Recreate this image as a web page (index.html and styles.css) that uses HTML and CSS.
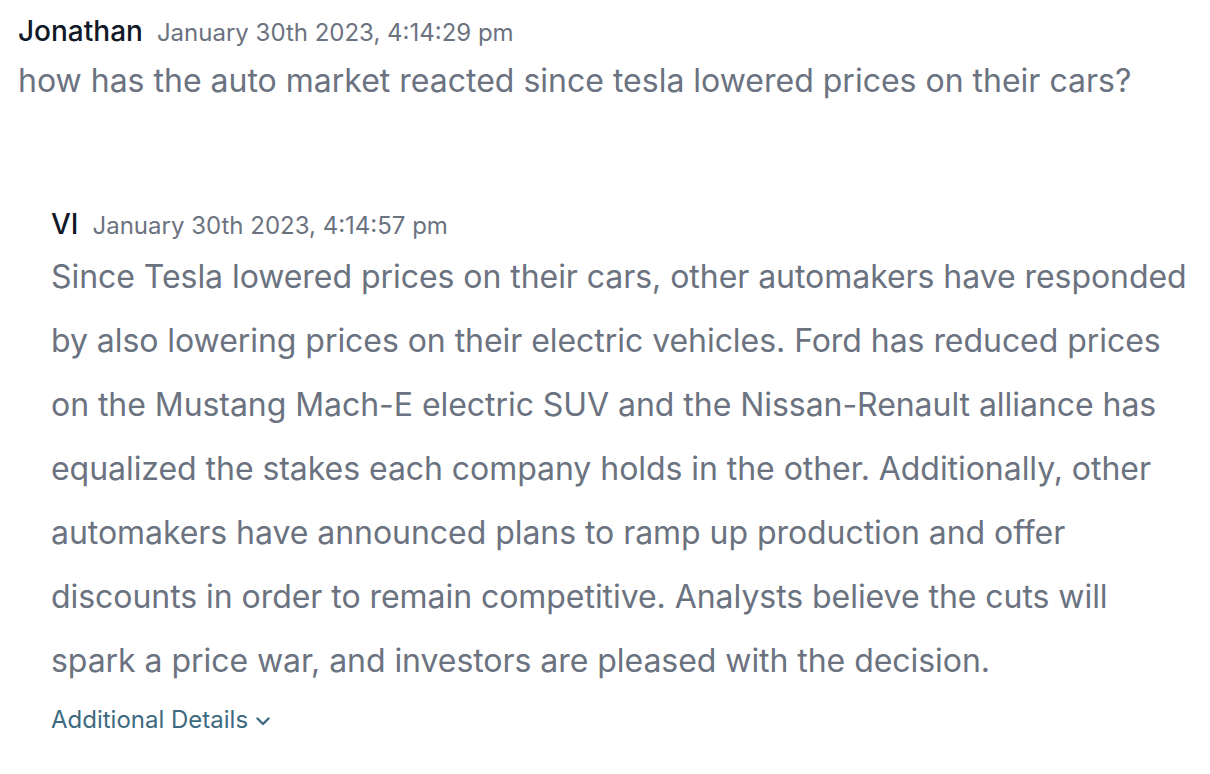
FILE: index.html
```html
<!DOCTYPE html>
<html>
<head>
<meta charset="utf-8">
<link rel="stylesheet" href="styles.css">
</head>
<body>
<div class="chat">
  <div class="message user">
    <div class="meta"><span class="name">Jonathan</span><span class="time">January 30th 2023, 4:14:29 pm</span></div>
    <div class="text question">how has the auto market reacted since tesla lowered prices on their cars?</div>
  </div>
  <div class="message bot">
    <div class="meta"><span class="name">VI</span><span class="time">January 30th 2023, 4:14:57 pm</span></div>
    <div class="text answer">Since Tesla lowered prices on their cars, other automakers have responded by also lowering prices on their electric vehicles. Ford has reduced prices on the Mustang Mach-E electric SUV and the Nissan-Renault alliance has equalized the stakes each company holds in the other. Additionally, other automakers have announced plans to ramp up production and offer discounts in order to remain competitive. Analysts believe the cuts will spark a price war, and investors are pleased with the decision.</div>
    <a class="details" href="#">Additional Details<svg class="chev" width="18" height="18" viewBox="0 0 18 18"><path d="M3.5 6.5l5.5 5.5 5.5-5.5" fill="none" stroke="currentColor" stroke-width="2.4" stroke-linecap="round" stroke-linejoin="round"/></svg></a>
  </div>
</div>
</body>
</html>
```
FILE: styles.css
```css
html, body {
  margin: 0;
  padding: 0;
  background: #ffffff;
}
body {
  font-family: Inter, "Noto Sans", sans-serif;
  color: #6b7280;
}
.chat {
  padding: 11px 18px 0 18px;
}
.meta {
  display: flex;
  align-items: baseline;
  gap: 14px;
  line-height: 40px;
}
.name {
  font-size: 28px;
  color: #111827;
  font-weight: 500;
}
.time {
  font-size: 24px;
  color: #6b7280;
}
.text {
  font-size: 32px;
  color: #6b7280;
}
.question {
  line-height: 56px;
}
.bot {
  margin-top: 95px;
  padding-left: 33px;
}
.answer {
  line-height: 64px;
  margin-top: -1px;
  letter-spacing: -0.05px;
}
.details {
  display: inline-flex;
  align-items: center;
  gap: 6px;
  margin-top: 12px;
  font-size: 24px;
  color: #3d6a80;
  text-decoration: none;
}
.chev {
  flex: 0 0 18px;
  margin-top: 2px;
}
```
